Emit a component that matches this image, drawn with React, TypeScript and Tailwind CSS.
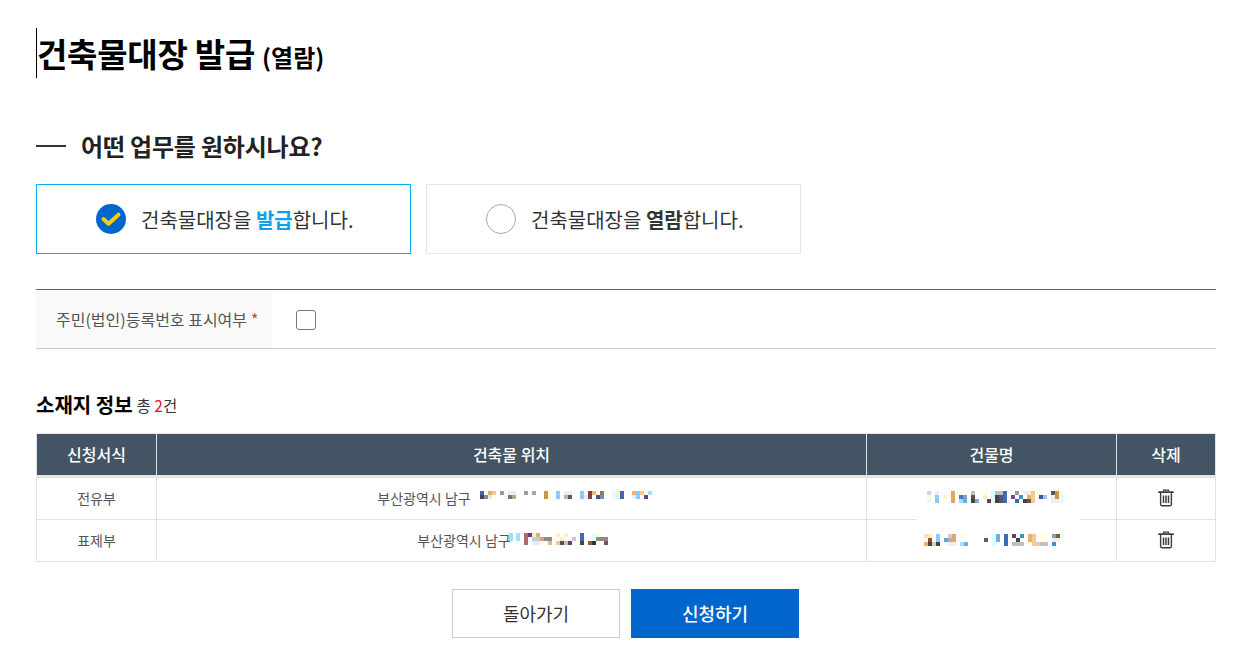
import React from "react";

type Cell = [number, number, string];

const addrRow1: Cell[] = [
  [5, 4, "#3f6aa8"], [13, 4, "#c9b48c"], [17, 4, "#f8c98a"], [25, 4, "#999999"], [33, 4, "#eeeeee"], [37, 4, "#eeeeee"],
  [49, 4, "#9a9aa8"], [57, 4, "#99a5b8"], [69, 4, "#d39440"], [69, 8, "#d39440"], [81, 4, "#90c8f8"], [81, 8, "#90c8f8"],
  [89, 4, "#eeeedd"], [93, 4, "#eeeeee"], [105, 4, "#90c8f8"], [105, 8, "#90c8f8"], [113, 4, "#8c3c3c"], [113, 8, "#8c3c3c"],
  [117, 4, "#f0b880"], [125, 4, "#8c7c60"], [137, 4, "#e0ffff"], [137, 8, "#e0ffff"], [141, 4, "#fff0c0"], [145, 4, "#3f6aa8"],
  [145, 8, "#3f6aa8"], [157, 4, "#f0b070"], [161, 4, "#90c8f8"], [161, 8, "#90c8f8"], [165, 4, "#f8c98a"], [173, 4, "#a0e0ff"],
  [5, 8, "#444444"], [9, 8, "#7c8cb8"], [13, 8, "#ffe8b8"], [33, 8, "#607c90"], [37, 8, "#b8a488"], [89, 8, "#a8b8cc"],
  [93, 8, "#6c5060"], [109, 8, "#e8e8f8"], [121, 8, "#555555"], [125, 8, "#7090c0"], [141, 8, "#eeeeff"], [157, 8, "#eeeeee"],
  [169, 8, "#703c90"],
];

const addrRow2: Cell[] = [
  [4, 0, "#a0e0ff"], [4, 4, "#a0e0ff"], [11, 0, "#a0e0ff"], [11, 4, "#a0e0ff"], [19, 0, "#b06a6a"], [19, 4, "#b06a6a"],
  [19, 8, "#b06a6a"], [23, 0, "#703c70"], [27, 0, "#ffeeb8"], [31, 0, "#c9b48c"], [27, 4, "#a8d8f0"], [31, 4, "#d8c8b0"],
  [35, 4, "#d8a080"], [39, 4, "#8c8c8c"], [43, 4, "#8c8c8c"], [27, 8, "#eee8f0"], [31, 8, "#eee8f0"], [43, 8, "#e8b880"],
  [51, 0, "#ffeeb8"], [51, 8, "#f0c890"], [55, 4, "#ffeeb8"], [55, 8, "#445080"], [59, 0, "#ffeeb8"], [59, 8, "#e8b880"],
  [63, 8, "#445080"], [67, 4, "#d8c0d0"], [71, 8, "#ffffe0"], [75, 0, "#3f6aa8"], [75, 4, "#3f6aa8"], [75, 8, "#444444"],
  [83, 8, "#a05830"], [87, 0, "#e0ffff"], [87, 4, "#e0ffff"], [87, 8, "#333333"], [91, 0, "#ffffd0"], [91, 4, "#8c8c8c"],
  [91, 8, "#ffffe0"], [95, 4, "#8c8c8c"], [99, 4, "#8c8c8c"], [99, 8, "#905040"],
];

const nameRow1: Cell[] = [
  [0, 0, "#ccd8ee"], [0, 4, "#ffffd0"], [0, 8, "#e0ffff"], [8, 0, "#eeeeff"], [8, 4, "#90c8f8"], [8, 8, "#90c8f8"], [16, 4, "#fff0c0"],
  [24, 0, "#e0a868"], [24, 4, "#e0a868"], [24, 8, "#e0a868"], [32, 0, "#ffffe0"], [32, 4, "#4878c0"], [32, 8, "#a0e0ff"],
  [36, 4, "#78a0c8"], [36, 8, "#68b0e8"], [44, 0, "#c0c0c0"], [44, 4, "#555555"], [44, 8, "#444444"], [48, 8, "#88a8d0"],
  [56, 0, "#ffffe0"], [56, 4, "#ffeeb8"], [60, 8, "#6c4050"], [64, 0, "#d8ffff"], [64, 4, "#d8ffff"], [64, 8, "#d8ffff"],
  [68, 0, "#c0c0c0"], [68, 4, "#444444"], [68, 8, "#444444"], [72, 0, "#c0c0c0"], [72, 4, "#5050a0"], [72, 8, "#555555"],
  [76, 0, "#3f6ab0"], [76, 4, "#3f6ab0"], [76, 8, "#3f6ab0"], [84, 4, "#704c90"], [88, 0, "#999999"], [88, 8, "#3f6ab0"],
  [92, 4, "#4090d0"], [96, 0, "#eeeeee"], [96, 8, "#444444"], [100, 0, "#eeeeee"], [100, 4, "#e8b070"], [100, 8, "#555555"],
  [104, 0, "#ffc888"], [104, 4, "#ffc888"], [104, 8, "#ffc888"], [112, 4, "#445090"], [116, 4, "#90c8f8"], [124, 0, "#555555"],
  [124, 4, "#eeeeee"], [124, 8, "#eeeeee"], [128, 0, "#d39440"], [128, 4, "#d39440"], [128, 8, "#eeeeee"], [132, 0, "#e0ffff"],
  [132, 4, "#e0ffff"], [132, 8, "#e0ffff"],
];

const nameRow2: Cell[] = [
  [0, 0, "#ffe0b0"], [0, 8, "#e8b070"], [4, 0, "#ffe8b8"], [4, 4, "#8c5030"], [4, 8, "#444444"], [8, 8, "#f0c890"], [12, 0, "#90c8f8"],
  [12, 4, "#90c8f8"], [12, 8, "#444444"], [20, 4, "#68a0d8"], [24, 0, "#e8c8b8"], [24, 4, "#b8a8c8"], [24, 8, "#eeeeee"],
  [28, 0, "#e0a868"], [28, 4, "#e0a868"], [28, 8, "#eeeeee"], [36, 0, "#ffffd0"], [36, 8, "#a0e0ff"], [40, 8, "#68b0e8"],
  [60, 0, "#ffffd0"], [60, 4, "#704c80"], [68, 0, "#d8ffff"], [68, 4, "#d8ffff"], [68, 8, "#d8ffff"], [72, 0, "#68b0e8"],
  [72, 4, "#68b0e8"], [80, 0, "#3f6ab0"], [80, 4, "#3f6ab0"], [80, 8, "#3f6ab0"], [88, 0, "#703c70"], [88, 8, "#c0c0c0"],
  [92, 4, "#444444"], [92, 8, "#c0c0c0"], [96, 0, "#4090d0"], [96, 8, "#c0c0c0"], [104, 0, "#e8b070"], [104, 4, "#e8b070"],
  [108, 0, "#ffc888"], [108, 4, "#ffc888"], [108, 8, "#ffc888"], [112, 8, "#e8c8b8"], [116, 0, "#ffffd0"], [116, 8, "#c0c0c0"],
  [120, 4, "#ffffe0"], [120, 8, "#c0c0c0"], [128, 0, "#999999"], [128, 4, "#eeeeee"], [128, 8, "#4090d0"], [132, 0, "#806040"],
  [132, 4, "#eeeeee"], [136, 0, "#e0ffff"],
];

// blurred-out address / building name
const Mosaic = ({ cells, width, className }: { cells: Cell[]; width: number; className?: string }) => (
  <svg width={width} height={12} className={className} shapeRendering="crispEdges">
    {cells.map(([x, y, fill], i) => (
      <rect key={i} x={x} y={y} width={4} height={4} fill={fill} />
    ))}
  </svg>
);

const TrashIcon = () => (
  <svg width="16" height="18" viewBox="0 0 16 18" className="mx-auto mb-[2px] block" fill="none" stroke="#3d3d3d">
    <path d="M5.5 2.5V1.2h5v1.3" strokeWidth="1.2" />
    <path d="M1 3.2h14" strokeWidth="1.8" strokeLinecap="round" />
    <path d="M2.6 4v11.2c0 1 .7 1.6 1.6 1.6h7.6c.9 0 1.6-.6 1.6-1.6V4" strokeWidth="1.4" />
    <path d="M5.5 6.5v7.5M8 6.5v7.5M10.5 6.5v7.5" strokeWidth="1.5" />
  </svg>
);

const CheckedRadio = () => (
  <svg width="30" height="30" viewBox="0 0 30 30" className="shrink-0">
    <circle cx="15" cy="15" r="15" fill="#0066cc" />
    <path d="M7.5 15l5 4.7 10-9" fill="none" stroke="#ffcc11" strokeWidth="4" strokeLinecap="round" strokeLinejoin="round" />
  </svg>
);

const thClass = "border border-[#e5e5e5] bg-[#435464] pb-[2px] text-center text-[16px] font-medium text-white";
const tdClass = "border border-[#e2e2e2] text-center text-[14px] text-[#555]";

export default function App() {
  return (
    <div className="pl-[36px] pr-[38px] pt-[28px] font-['Noto_Sans_CJK_KR','Noto_Sans',sans-serif] text-[#222]">
      <h1 className="flex h-[50px] items-baseline border-l border-black pt-[3px] text-[33px] font-bold leading-[45px] tracking-[-0.25px] text-black">
        건축물대장 발급<span className="ml-[7px] text-[24px] font-bold tracking-normal">(열람)</span>
      </h1>

      <div className="mt-[52px] flex h-[32px] items-center">
        <span className="h-[2px] w-[30px] bg-[#333]" />
        <h2 className="ml-[15px] text-[24px] font-bold leading-none tracking-[-0.2px]">어떤 업무를 원하시나요?</h2>
      </div>

      <div className="mt-[22px] flex gap-[15px]">
        <div className="flex h-[70px] w-[375px] items-center border border-[#00aeef] pl-[59px]">
          <CheckedRadio />
          <span className="ml-[15px] pt-[2px] text-[20px] text-[#333]">
            건축물대장을 <b className="font-bold text-[#0da2e8]">발급</b>합니다.
          </span>
        </div>
        <div className="flex h-[70px] w-[375px] items-center border border-[#e5e5e5] pl-[59px]">
          <span className="h-[30px] w-[30px] shrink-0 rounded-full border border-[#aaa]" />
          <span className="ml-[15px] pt-[2px] text-[20px] text-[#333]">
            건축물대장을 <b className="font-bold">열람</b>합니다.
          </span>
        </div>
      </div>

      <div className="mt-[35px] flex h-[60px] items-stretch border-t border-b border-t-[#666] border-b-[#ccc]">
        <div className="flex w-[236px] items-center bg-[#f9f9f9] pl-[20px] text-[16px] text-[#555]">
          주민(법인)등록번호 표시여부<span className="ml-[4px] text-[#e8334a]">*</span>
        </div>
        <div className="flex items-center pl-[24px]">
          <span className="mt-[2px] h-[20px] w-[20px] rounded-[3px] border border-[#777]" />
        </div>
      </div>

      <div className="mt-[42px] flex h-[28px] items-center">
        <h3 className="text-[20px] font-bold leading-none text-black">소재지 정보</h3>
        <span className="ml-[4px] mt-[2px] text-[15.5px] leading-none text-[#333]">
          총 <span className="text-[#e8102a]">2</span>건
        </span>
      </div>

      <table className="mt-[14px] w-[1179px] table-fixed border-collapse">
        <colgroup>
          <col className="w-[120px]" />
          <col className="w-[710px]" />
          <col className="w-[250px]" />
          <col className="w-[99px]" />
        </colgroup>
        <thead>
          <tr className="h-[43px] border-b-[3px] border-b-[#e5e5e5]">
            <th className={thClass}>신청서식</th>
            <th className={thClass}>건축물 위치</th>
            <th className={thClass}>건물명</th>
            <th className={thClass}>삭제</th>
          </tr>
        </thead>
        <tbody>
          <tr className="h-[43px]">
            <td className={tdClass}>전유부</td>
            <td className={tdClass}>
              <span className="inline-flex items-center">
                부산광역시 남구
                <Mosaic cells={addrRow1} width={177} className="mb-[12px] ml-[4px] mr-[-6px]" />
              </span>
            </td>
            <td className={`${tdClass} relative`}>
              <Mosaic cells={nameRow1} width={136} className="mb-[4px] ml-[60px]" />
              {/* white smear over the row line */}
              <span className="absolute bottom-[-2px] left-[50px] h-[3px] w-[163px] bg-white" />
            </td>
            <td className={tdClass}>
              <TrashIcon />
            </td>
          </tr>
          <tr className="h-[42px]">
            <td className={tdClass}>표제부</td>
            <td className={tdClass}>
              <span className="inline-flex items-center">
                부산광역시 남구
                <Mosaic cells={addrRow2} width={103} className="mb-[4px] ml-[-6px] mr-[-2px]" />
              </span>
            </td>
            <td className={tdClass}>
              <Mosaic cells={nameRow2} width={140} className="mb-[2px] ml-[57px]" />
            </td>
            <td className={tdClass}>
              <TrashIcon />
            </td>
          </tr>
        </tbody>
      </table>

      <div className="mt-[27px] flex justify-center gap-[11px] pr-[1px]">
        <button className="h-[49px] w-[168px] border border-[#ccc] bg-white text-[18px] text-[#333]">돌아가기</button>
        <button className="h-[49px] w-[168px] bg-[#0066cc] text-[18px] font-medium text-white">신청하기</button>
      </div>
    </div>
  );
}
